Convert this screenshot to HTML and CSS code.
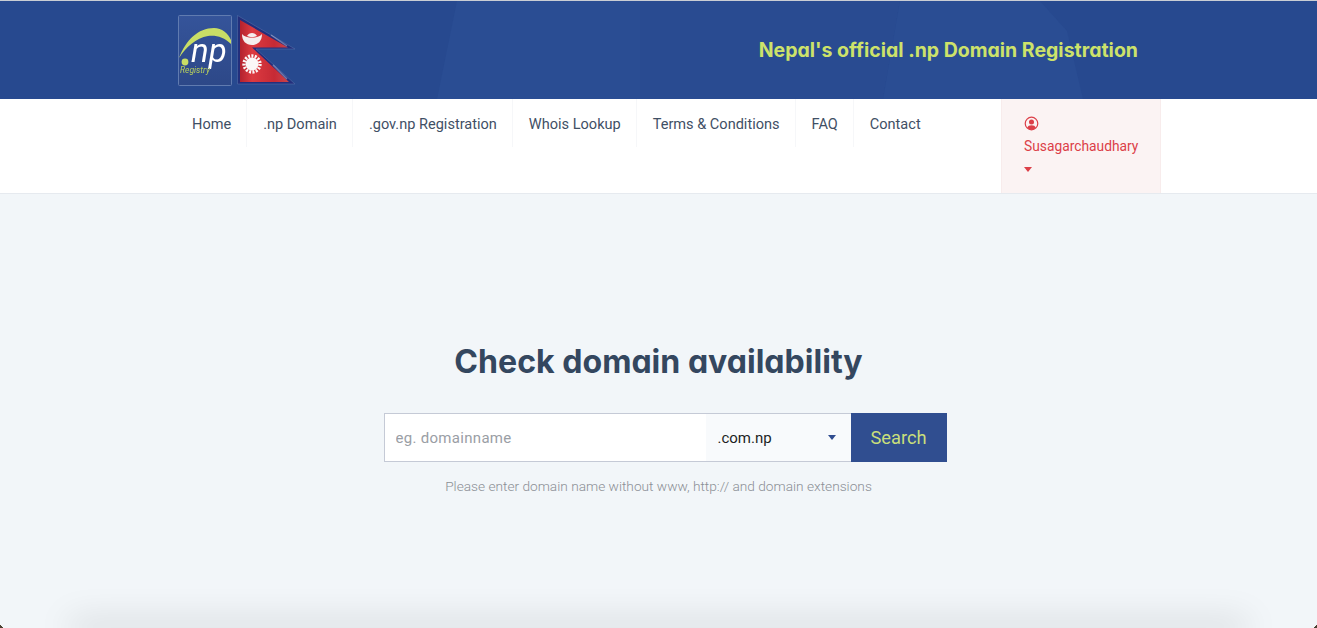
FILE: index.html
```html
<!DOCTYPE html>
<html lang="en">
<head>
<meta charset="utf-8">
<title>.np Domain Registration</title>
<link rel="stylesheet" href="styles.css">
</head>
<body>
<header class="banner">
  <svg class="banner-art" viewBox="0 0 1317 98" preserveAspectRatio="none" aria-hidden="true">
    <polygon points="457,0 640,0 640,98 437,98" fill="#2a4d93"/>
    <polygon points="640,0 900,0 883,98 640,98" fill="#294b91"/>
    <polygon points="900,0 1040,0 1067,30 1083,98 883,98" fill="#2a4d93"/>
  </svg>
  <div class="banner-inner">
    <div class="logos">
      <svg class="logo-np" viewBox="0 0 54 71" role="img" aria-label=".np Registry">
        <defs>
          <linearGradient id="logoBg" x1="0" y1="0" x2="0" y2="1">
            <stop offset="0" stop-color="#35549a"/>
            <stop offset="1" stop-color="#2d4888"/>
          </linearGradient>
          <linearGradient id="flagRed" x1="0" y1="0" x2="1" y2="0">
            <stop offset="0" stop-color="#b3222e"/>
            <stop offset=".25" stop-color="#dc3a40"/>
            <stop offset=".7" stop-color="#c62a35"/>
            <stop offset="1" stop-color="#c9454c"/>
          </linearGradient>
        </defs>
        <rect x=".5" y=".5" width="53" height="70" rx="1" fill="url(#logoBg)" stroke="#607bb0"/>
        <path d="M1 43C8 25 20 13 36 13c8 0 14 5 17 12v4C46 22 38 20 30 21 18 23 8 32 1 43z" fill="#c9de66"/>
        <circle cx="7" cy="47" r="3.400" fill="#c9de66"/>
        <text x="13" y="47" class="logo-np-text">np</text>
        <text x="2" y="58" class="logo-reg-text">Registry</text>
      </svg>
      <svg class="logo-flag" viewBox="0 0 58 71" aria-hidden="true">
        <path d="M.5.5 58 34H19L58 69H.5z" fill="#232f7c" stroke="#5a76ad" stroke-width=".5"/>
        <path d="M3 5 51 32.500H15L52 67H3z" fill="url(#flagRed)"/>
        <path d="M34 20 50 31M36 50 50 64" stroke="#fff" stroke-width="1.500" opacity=".35" fill="none"/>
        <path d="M5 19c4 5 16 5 20 0 0 7-4 11-10 11S5 26 5 19z" fill="#f5eeee"/>
        <path d="M10 21c2-4 8-4 10 0-3 1.500-7 1.500-10 0z" fill="#f5eeee"/>
        <circle cx="15" cy="49" r="6.500" fill="#fbf7f7"/>
        <circle cx="15" cy="49" r="8" fill="none" stroke="#fbf7f7" stroke-width="3.400" stroke-dasharray="2 1.350"/>
      </svg>
    </div>
    <p class="tagline">Nepal's official .np Domain Registration</p>
  </div>
</header>
<nav class="navbar">
  <div class="navbar-inner">
    <ul class="menu">
      <li class="menu-item"><a href="#">Home</a></li>
      <li class="menu-item"><a href="#">.np Domain</a></li>
      <li class="menu-item"><a href="#">.gov.np Registration</a></li>
      <li class="menu-item"><a href="#">Whois Lookup</a></li>
      <li class="menu-item"><a href="#">Terms &amp; Conditions</a></li>
      <li class="menu-item"><a href="#">FAQ</a></li>
      <li class="menu-item"><a href="#">Contact</a></li>
    </ul>
    <div class="account">
      <svg class="account-icon" viewBox="0 0 16 16" aria-hidden="true">
        <circle cx="8" cy="8" r="6.700" fill="none" stroke="currentColor" stroke-width="1.300"/>
        <circle cx="8" cy="6.300" r="2.700" fill="currentColor"/>
        <path d="M3.400 12.600C4 10.600 5.600 9.800 8 9.800s4 .8 4.600 2.800A6 6 0 0 1 8 14.600a6 6 0 0 1-4.600-2z" fill="currentColor"/>
      </svg>
      <span class="account-name">Susagarchaudhary</span>
      <span class="caret"></span>
    </div>
  </div>
</nav>
<main class="hero">
  <h1 class="hero-title">Check domain availability</h1>
  <form class="search">
    <input class="search-input" type="text" placeholder="eg. domainname">
    <div class="search-select"><span>.com.np</span><span class="select-caret"></span></div>
    <button class="search-button" type="button">Search</button>
  </form>
  <p class="hint">Please enter domain name without www, http:// and domain extensions</p>
</main>
<div class="footer-edge"></div>
</body>
</html>
```
FILE: styles.css
```css
* { box-sizing: border-box; }
html, body { height: 100%; }
body {
  position: relative;
  margin: 0;
  height: 628px;
  overflow: hidden;
  display: flex;
  flex-direction: column;
  background: #f2f6f9;
  font-family: Roboto, "Liberation Sans", sans-serif;
  border-top: 1px solid #c9cdd4;
}
body::before,
body::after {
  content: "";
  position: absolute;
  bottom: 0;
  width: 3px;
  height: 4px;
}
body::before { left: 0; background: linear-gradient(to top right, #4a4030 48%, transparent 52%); }
body::after { right: 0; background: linear-gradient(to top left, #4a4030 48%, transparent 52%); }
.banner {
  position: relative;
  height: 98px;
  flex: none;
  background: #27498f;
  overflow: hidden;
}
.banner-art {
  position: absolute;
  inset: 0;
  width: 100%;
  height: 100%;
}
.banner-inner {
  position: relative;
  height: 100%;
  margin: 0 179px 0 178px;
  display: flex;
  align-items: center;
  justify-content: space-between;
}
.logos { display: flex; gap: 5px; align-items: flex-start; filter: blur(.35px); }
.logo-np { width: 54px; height: 71px; display: block; }
.logo-flag { width: 58px; height: 71px; display: block; }
.logo-np-text { font: italic 33px Roboto, sans-serif; fill: #fff; }
.logo-reg-text { font: italic 8.500px Roboto, sans-serif; fill: #b7cf5c; }
.tagline {
  margin: 0;
  font-family: Inter, sans-serif;
  font-feature-settings: "cv11";
  font-weight: 700;
  font-size: 19.500px;
  color: #cde26a;
}
.navbar {
  height: 95px;
  flex: none;
  background: #fff;
  border-bottom: 1px solid #e6eaef;
}
.navbar-inner {
  height: 100%;
  margin: 0 156px 0 176px;
  display: flex;
  justify-content: space-between;
}
.menu {
  list-style: none;
  margin: 0;
  padding: 0;
  display: flex;
  align-items: flex-start;
}
.menu-item {
  height: 48px;
  padding: 15px 15px 0 16px;
  border-right: 1px solid #f6f7f9;
  font-size: 14.560px;
  line-height: 20px;
}
.menu-item:last-child { border-right: 0; }
.menu-item a { color: #3f4f65; text-decoration: none; }
.account {
  width: 160px;
  padding: 17px 22px 0;
  background: #fbf3f3;
  border-left: 1px solid #f8ecec;
  border-right: 1px solid #f8ecec;
  color: #dc3f48;
  font-size: 13.800px;
  display: flex;
  flex-direction: column;
  align-items: flex-start;
}
.account-icon { width: 15px; height: 15px; display: block; }
.account-name { margin-top: 5px; line-height: 20px; }
.caret {
  margin-top: 11px;
  border-left: 4px solid transparent;
  border-right: 4px solid transparent;
  border-top: 5px solid currentColor;
}
.hero {
  flex: 1;
  display: flex;
  flex-direction: column;
  align-items: center;
  padding-top: 147px;
}
.hero-title {
  margin: 0;
  font-family: Inter, sans-serif;
  font-feature-settings: "cv11";
  font-weight: 700;
  font-size: 32.100px;
  line-height: 42px;
  color: #34475f;
}
.search {
  margin: 30px 0 0 13px;
  width: 563px;
  height: 49px;
  display: flex;
}
.search-input {
  width: 322px;
  height: 100%;
  padding: 0 11px;
  border: 1px solid #c5cad6;
  border-right: 0;
  outline: 0;
  background: #fff;
  font: 15px Roboto, sans-serif;
  letter-spacing: .3px;
}
.search-input::placeholder { color: #9a9ea5; opacity: 1; }
.search-select {
  width: 145px;
  padding: 0 15px 0 12px;
  background: #f8fafc;
  border-top: 1px solid #c5cad6;
  border-bottom: 1px solid #c5cad6;
  display: flex;
  align-items: center;
  justify-content: space-between;
  font-size: 15px;
  color: #1c1f24;
}
.select-caret {
  border-left: 4px solid transparent;
  border-right: 4px solid transparent;
  border-top: 5px solid #2f4c8f;
}
.search-button {
  flex: 1;
  border: 0;
  padding: 0;
  background: #304e90;
  color: #c9df7b;
  font: 18.300px Roboto, sans-serif;
}
.hint {
  margin: 14px 0 0;
  font-size: 13.700px;
  line-height: 20px;
  font-weight: 300;
  color: #8b8f95;
}
.footer-edge {
  flex: none;
  height: 0;
  margin: 0 75px;
  box-shadow: 0 0 34px 5px rgba(0, 0, 0, .22);
}
```
